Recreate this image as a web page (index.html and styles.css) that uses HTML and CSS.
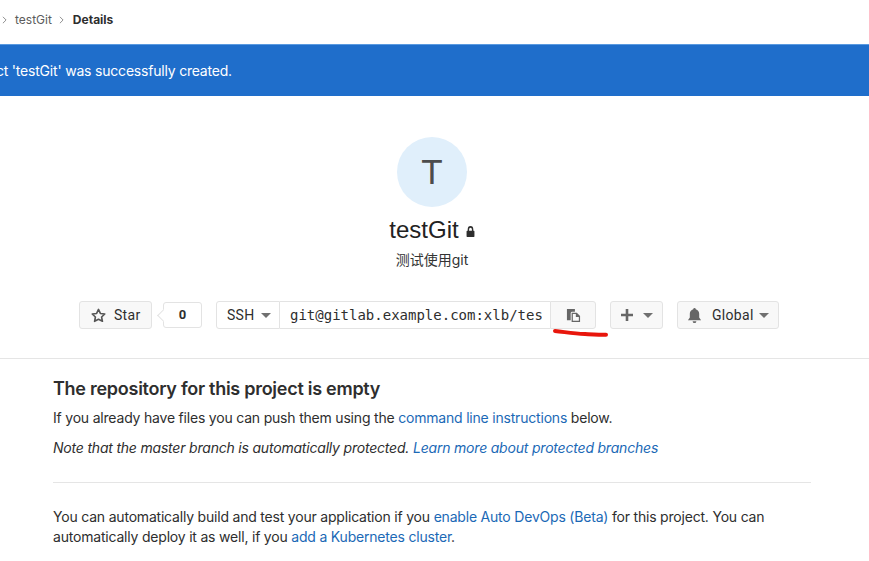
FILE: index.html
```html
<!DOCTYPE html>
<html lang="en">
<head>
<meta charset="utf-8">
<title>testGit</title>
<link rel="stylesheet" href="styles.css">
</head>
<body>
<nav class="crumbs">
  <span class="sep"><svg viewBox="0 0 6 10" width="5" height="8"><path d="M1 1l4 4-4 4" fill="none" stroke="#8c8c8c" stroke-width="1.200"/></svg></span><a class="crumb">testGit</a><span class="sep"><svg viewBox="0 0 6 10" width="5" height="8"><path d="M1 1l4 4-4 4" fill="none" stroke="#8c8c8c" stroke-width="1.200"/></svg></span><strong class="crumb-current">Details</strong>
</nav>
<div class="flash"><span class="flash-text">Project 'testGit' was successfully created.</span></div>
<header class="home">
  <div class="avatar">T</div>
  <h1 class="title">testGit<svg class="lock" viewBox="0 0 16 16" width="9" height="11" preserveAspectRatio="none"><path d="M3 7V5a5 5 0 0 1 10 0v2h1a1 1 0 0 1 1 1v7a1 1 0 0 1-1 1H2a1 1 0 0 1-1-1V8a1 1 0 0 1 1-1zm2.500 0h5V5a2.500 2.500 0 0 0-5 0z" fill="#2e2e2e"/></svg></h1>
  <p class="desc">测试使用git</p>
  <div class="actions">
    <div class="star-group">
      <button class="btn star"><svg class="ic" viewBox="0 0 16 16" width="15" height="15"><path d="M8 1.500l2 4.300 4.700.6-3.400 3.200.9 4.600L8 12l-4.200 2.200.9-4.600L1.300 6.400 6 5.800z" fill="none" stroke="#555" stroke-width="1.700" stroke-linejoin="round"/></svg>Star</button>
      <span class="count">0</span>
    </div>
    <div class="clone">
      <button class="btn-seg ssh">SSH<i class="caret"></i></button>
      <span class="url"><span class="url-text">git@gitlab.example.com:xlb/testGit.git</span></span>
      <button class="btn-seg copy"><svg viewBox="0 0 16 16" width="15" height="15"><path d="M1 1h8.500v3H6.500A1.500 1.500 0 0 0 5 5.500V13H1z" fill="#666"/><path fill-rule="evenodd" d="M6 5h5.500L15 8.500V15H6zM7.300 6.300v7.400h6.400V9.500H10.500V6.300z" fill="#666"/></svg></button>
    </div>
    <button class="btn plus"><svg viewBox="0 0 12 12" width="12" height="12"><path d="M4.700 0h2.600v4.700H12v2.600H7.300V12H4.700V7.300H0V4.700h4.700z" fill="#666"/></svg><i class="caret"></i></button>
    <button class="btn global"><svg viewBox="0 0 16 16" width="15" height="15"><path d="M8 0a1.500 1.500 0 0 1 1.400 1.200C11.600 1.800 13 3.700 13 6v4l2 3H1l2-3V6c0-2.300 1.400-4.200 3.600-4.800A1.500 1.500 0 0 1 8 0zM6 14h4a2 2 0 0 1-4 0z" fill="#666"/></svg>Global<i class="caret"></i></button>
  </div>
  <svg class="scribble" viewBox="0 0 60 10" width="60" height="10"><path d="M4 3C14 4 22 5.500 34 6c8 .4 15 .8 21 .8" fill="none" stroke="#e8160c" stroke-width="4" stroke-linecap="round"/></svg>
</header>
<main class="empty">
  <div class="empty-inner">
    <h2 class="empty-title">The repository for this project is empty</h2>
    <p class="line">If you already have files you can push them using the <a class="link">command line instructions</a> below.</p>
    <p class="line note"><em>Note that the master branch is automatically protected.</em> <a class="link link-em">Learn more about protected branches</a></p>
    <hr class="rule">
    <p class="para">You can automatically build and test your application if you <a class="link">enable Auto DevOps (Beta)</a> for this project. You can automatically deploy it as well, if you <a class="link">add a Kubernetes cluster</a>.</p>
  </div>
</main>
</body>
</html>
```
FILE: styles.css
```css
* { box-sizing: border-box; }
html, body { margin: 0; padding: 0; }
body {
  width: 869px;
  height: 561px;
  overflow: hidden;
  background: #fff;
  color: #2e2e2e;
  font-family: Inter, "Liberation Sans", "Noto Sans CJK SC", sans-serif;
  font-size: 14px;
}
.crumbs {
  height: 44px;
  display: flex;
  align-items: center;
  padding-left: 2px;
  padding-bottom: 5px;
  font-size: 12px;
  color: #5c5c5c;
}
.sep { display: flex; align-items: center; width: 13px; }
.crumb { margin-right: 7px; }
.crumb-current { color: #2e2e2e; margin-left: 1px; }
.flash {
  height: 52px;
  background: #1f6ecb;
  border-top: 1px solid #5a9ae0;
  color: #fff;
  display: flex;
  align-items: center;
  overflow: hidden;
}
.flash-text { margin-left: -37px; white-space: nowrap; letter-spacing: -.2px; }
.home {
  height: 263px;
  position: relative;
  border-bottom: 1px solid #e5e5e5;
  display: flex;
  flex-direction: column;
  align-items: center;
  padding-top: 41px;
  padding-right: 5px;
}
.avatar {
  width: 70px;
  height: 70px;
  border-radius: 50%;
  background: #e0effb;
  color: #4c4c4c;
  font-family: "Liberation Sans", sans-serif;
  font-size: 35px;
  display: flex;
  align-items: center;
  justify-content: center;
}
.title {
  margin: 9px 0 0;
  font-family: "Liberation Sans", sans-serif;
  font-size: 24px;
  font-weight: 400;
  line-height: 28px;
  color: #222;
  display: flex;
  align-items: center;
  gap: 7px;
}
.lock { margin-top: 2px; }
.desc { margin: 6px 0 0; line-height: 20px; color: #333; font-size: 14px; }
.actions {
  position: absolute;
  top: 205px;
  left: 79px;
  display: flex;
  align-items: stretch;
  height: 28px;
}
.btn, .btn-seg {
  font-family: Roboto, "Liberation Sans", sans-serif;
  font-size: 14px;
  letter-spacing: .3px;
  color: #2e2e2e;
  background: #f8f8f8;
  border: 1px solid #e3e3e3;
  border-radius: 3px;
  display: flex;
  align-items: center;
  padding: 0;
  height: 28px;
}
.star-group { display: flex; align-items: center; }
.star { width: 73px; padding-left: 11px; gap: 8px; }
.count {
  position: relative;
  width: 39px;
  height: 26px;
  margin-left: 11px;
  margin-right: -1px;
  border: 1px solid #e3e3e3;
  border-radius: 3px;
  font-family: Roboto, sans-serif;
  font-weight: 700;
  font-size: 13px;
  text-align: center;
  line-height: 24px;
}
.count::before {
  content: "";
  position: absolute;
  left: -5px;
  top: 8px;
  width: 8px;
  height: 8px;
  background: #fff;
  border-left: 1px solid #e3e3e3;
  border-bottom: 1px solid #e3e3e3;
  transform: rotate(45deg);
}
.clone { display: flex; margin-left: 15px; width: 380px; height: 28px; }
.btn-seg.ssh {
  width: 64px;
  background: #fff;
  border-radius: 3px 0 0 3px;
  padding-left: 10px;
  gap: 6px;
}
.url {
  width: 270px;
  border-top: 1px solid #e3e3e3;
  border-bottom: 1px solid #e3e3e3;
  padding: 0 8px 0 10px;
  font-family: "DejaVu Sans Mono", monospace;
  font-size: 14px;
  line-height: 26px;
  white-space: nowrap;
}
.url-text { display: block; overflow: hidden; }
.btn-seg.copy {
  width: 46px;
  border-radius: 0 3px 3px 0;
  justify-content: center;
}
.caret {
  width: 0;
  height: 0;
  border-left: 5px solid transparent;
  border-right: 5px solid transparent;
  border-top: 5px solid #707070;
  display: inline-block;
}
.plus { margin-left: 14px; width: 53px; padding-left: 10px; gap: 10px; }
.global { margin-left: 14px; width: 102px; padding-left: 9px; gap: 10px; }
.global .caret { margin-left: -5px; }
.scribble { position: absolute; left: 551px; top: 232px; }
.empty { padding: 0 58px 0 53px; }
.empty-title { margin: 19px 0 0; font-size: 18px; line-height: 22px; font-weight: 600; color: #2e2e2e; letter-spacing: -.27px; }
.line { margin: 8px 0 0; line-height: 20px; color: #2e2e2e; letter-spacing: -.2px; }
.note { margin-top: 10px; }
.link { color: #1b69b6; }
.link-em { font-style: italic; }
.rule { border: 0; border-top: 1px solid #e5e5e5; margin: 24px 0 0; }
.para { margin: 24px 0 0; line-height: 20px; letter-spacing: -.2px; }
```
